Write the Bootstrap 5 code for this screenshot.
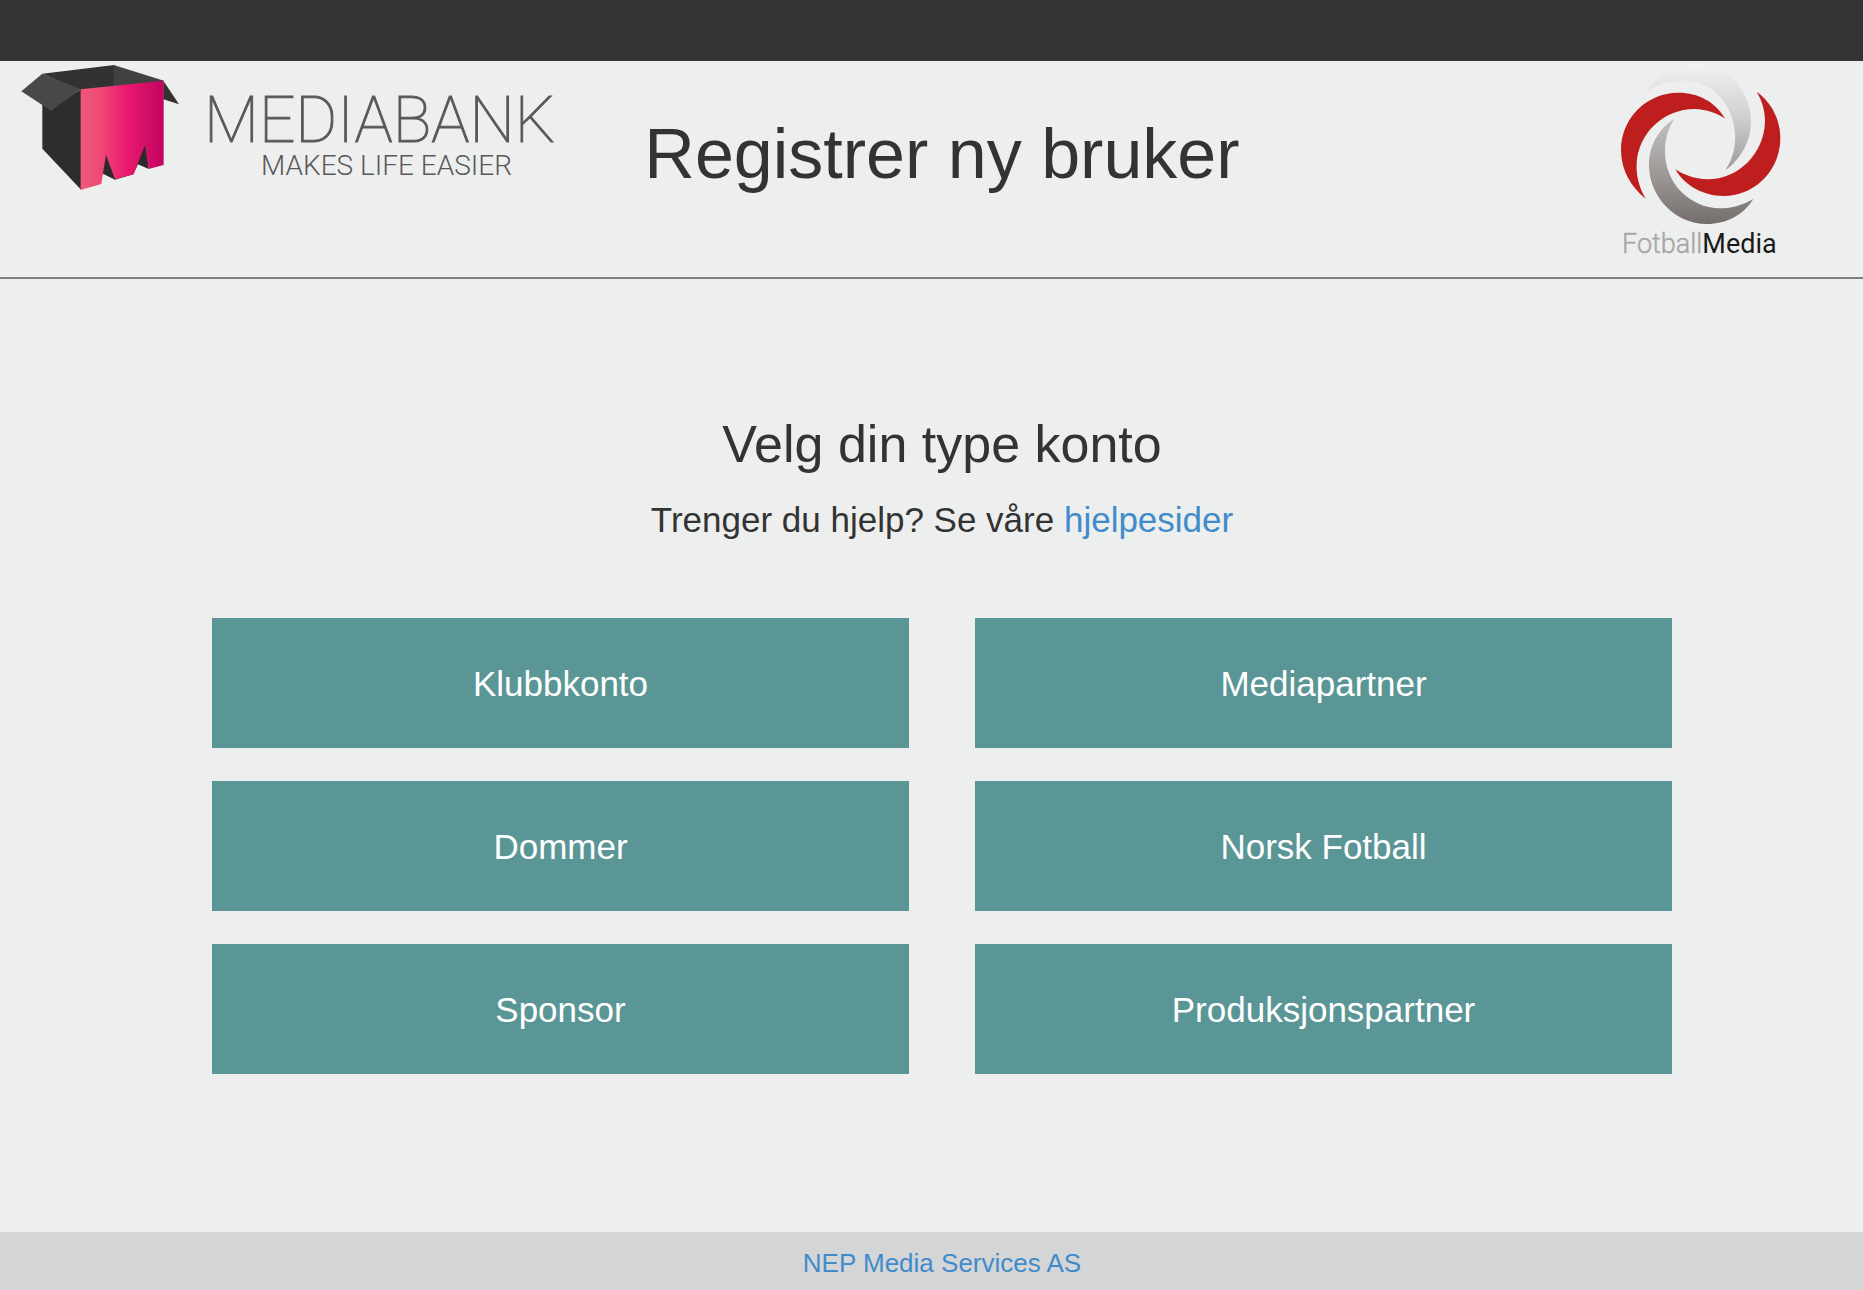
<!DOCTYPE html>
<html lang="no">
<head>
<meta charset="utf-8">
<meta name="viewport" content="width=device-width, initial-scale=1">
<title>Registrer ny bruker</title>
<link href="https://cdn.jsdelivr.net/npm/bootstrap@5.3.0/dist/css/bootstrap.min.css" rel="stylesheet">
<style>
  body { background: #edefee; color: #333; font-family: "Liberation Sans", Arial, sans-serif; }
  a { color: #428bca; }
  .topbar { height: 61px; background: #333; }
  .site-head { border-bottom: 2px solid #808080; padding-left: 21px; min-height: 218px; }
  .page-title { font-size: 70px; line-height: 77px; margin: 55px 0 0; }
  .fm-logo { margin-right: 81px; }
  .site-main { padding: 137px 0 64px 21px; }
  .choose-title { font-size: 52px; line-height: 57px; margin: 0 0 22px; }
  .help-text { font-size: 35px; line-height: 50px; margin: 0 0 73px; }
  .account-types { max-width: 1460px; }
  .account-types .row { --bs-gutter-x: 66px; --bs-gutter-y: 33px; }
  .btn-account { --bs-btn-color: #fff; --bs-btn-bg: #5b9696; --bs-btn-hover-color: #fff; --bs-btn-hover-bg: #4d8585; --bs-btn-active-color: #fff; --bs-btn-active-bg: #447676; --bs-btn-border-width: 0; font-size: 35px; line-height: 50px; padding: 41px 12px 39px; }
  .site-foot { background: #d4d5d7; padding: 13px 0 8px 21px; font-size: 26px; line-height: 37px; }
  .logo-name { font: 100 64px Roboto, sans-serif; }
  .logo-tag { font: 300 28px Roboto, sans-serif; }
  .fm-name { font: 300 27px Roboto, sans-serif; }
</style>
</head>
<body class="d-flex flex-column min-vh-100">
<div class="topbar"></div>
<header class="site-head">
  <div class="row g-0">
    <div class="col-4">
      <svg class="d-block" width="560" height="130" viewBox="0 0 560 130" role="img" aria-label="Mediabank">
        <defs>
          <linearGradient id="pink"><stop offset="0" stop-color="#f0587a"/><stop offset=".22" stop-color="#ee4b75"/><stop offset=".54" stop-color="#ec1a70"/><stop offset="1" stop-color="#c20460"/></linearGradient>
        </defs>
        <g transform="scale(.3333) translate(-63 -33)">
          <path fill="#333132" d="M127 71L343 45V112L242 122Z"/>
          <path fill="#414141" d="M341 45L492 92L480 100L341 113Z"/>
          <path fill="#2f2c2d" d="M127 150L153 172L244 118V420L127 296Z"/>
          <path fill="#48484a" d="M127 71L242 118L153 182L64 124Z"/>
          <path fill="#333132" d="M490 92L537 163L490 148Z"/>
          <path fill="#2b2b2b" d="M318 280H438L446 357L414 343L400 373L345 389L306 370Z"/>
          <path fill="url(#pink)" d="M242 118L491 92V345L446 357L435 285L401 373L345 388L318 314L304 402L242 420Z"/>
        </g>
        <text class="logo-name" x="183" y="81" fill="#58595b" stroke="#58595b" stroke-width="1">MEDIABANK</text>
        <text class="logo-tag" x="240" y="114" fill="#58595b">MAKES LIFE EASIER</text>
      </svg>
    </div>
    <div class="col-4 text-center">
      <h1 class="page-title fw-normal text-nowrap">Registrer ny bruker</h1>
    </div>
    <div class="col-4 d-flex justify-content-end">
      <svg class="fm-logo" width="162" height="210" viewBox="0 0 162 210" role="img" aria-label="FotballMedia">
        <defs>
          <linearGradient id="light" x2="0" y2="1"><stop offset="0" stop-color="#f2f2f2"/><stop offset=".5" stop-color="#d0cfcf"/><stop offset="1" stop-color="#9d9b9a"/></linearGradient>
          <linearGradient id="dark" x2="0" y2="1"><stop offset="0" stop-color="#c2c1c1"/><stop offset=".6" stop-color="#989391"/><stop offset="1" stop-color="#736d6c"/></linearGradient>
        </defs>
        <g transform="scale(.3333) translate(-60 -33)">
          <path fill="url(#light)" d="M140 122C175 75 225 43 290 43C385 43 453 125 453 215C453 270 425 325 376 361C400 325 407 290 405 250C400 165 340 93 255 92C210 92 170 105 140 122Z"/>
          <path fill="#be1e1e" d="M376 206C345 155 295 128 235 128C140 128 63 205 63 300C63 360 92 410 137 446C115 410 108 370 110 340C115 250 190 177 285 177C320 178 352 190 376 206Z"/>
          <path fill="url(#dark)" d="M223 206C178 235 147 285 147 345C147 440 225 522 320 522C380 522 430 495 460 447C430 465 395 475 360 475C270 473 195 400 195 305C195 265 205 235 223 206Z"/>
          <path fill="#be1e1e" d="M226 358C255 408 310 438 370 438C465 438 541 360 541 265C541 205 512 155 470 125C488 155 495 185 495 215C493 310 415 389 320 388C285 387 252 375 226 358Z"/>
        </g>
        <text class="fm-name" x="2" y="192" fill="#a6a6a6" stroke="#a6a6a6" stroke-width=".4">Fotball<tspan fill="#1a1a1a" stroke="none" font-weight="400">Media</tspan></text>
      </svg>
    </div>
  </div>
</header>
<main class="site-main text-center">
  <h2 class="choose-title fw-normal">Velg din type konto</h2>
  <p class="help-text">Trenger du hjelp? Se våre <a class="text-decoration-none" href="#">hjelpesider</a></p>
  <div class="account-types mx-auto">
    <div class="row row-cols-2">
      <div class="col"><button type="button" class="btn btn-account rounded-0 w-100">Klubbkonto</button></div>
      <div class="col"><button type="button" class="btn btn-account rounded-0 w-100">Mediapartner</button></div>
      <div class="col"><button type="button" class="btn btn-account rounded-0 w-100">Dommer</button></div>
      <div class="col"><button type="button" class="btn btn-account rounded-0 w-100">Norsk Fotball</button></div>
      <div class="col"><button type="button" class="btn btn-account rounded-0 w-100">Sponsor</button></div>
      <div class="col"><button type="button" class="btn btn-account rounded-0 w-100">Produksjonspartner</button></div>
    </div>
  </div>
</main>
<footer class="site-foot text-center mt-auto"><a class="text-decoration-none" href="#">NEP Media Services AS</a></footer>
<script src="https://cdn.jsdelivr.net/npm/bootstrap@5.3.0/dist/js/bootstrap.bundle.min.js"></script>
</body>
</html>
